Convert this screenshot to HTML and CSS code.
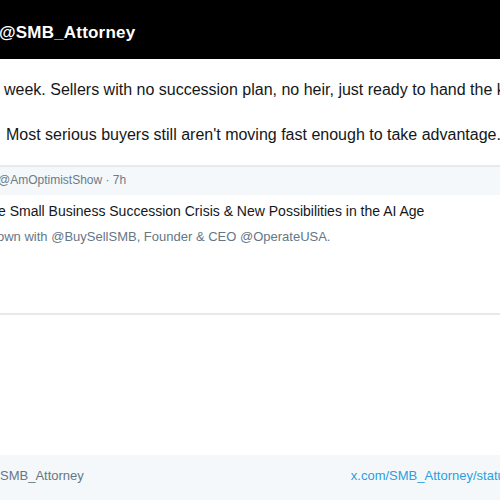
FILE: index.html
```html
<!DOCTYPE HTML>
<html lang="en-US">
<head>
	<meta charset="UTF-8" />
	<title>Post by @SMB_Attorney</title>
	<link rel="stylesheet" href="styles.css">
</head>
<body>

	<div class="page">

		<div class="top">
			<span class="handle">@SMB_Attorney</span>
		</div>

		<div class="post">
			<p class="line first">week. Sellers with no succession plan, no heir, just ready to hand the keys to someone.</p>
			<p class="line second">Most serious buyers still aren't moving fast enough to take advantage.</p>
		</div>

		<div class="quote">
			<div class="quote-head">@AmOptimistShow · 7h</div>
			<div class="quote-body">
				<div class="quote-title">e Small Business Succession Crisis &amp; New Possibilities in the AI Age</div>
				<div class="quote-desc">own with @BuySellSMB, Founder &amp; CEO @OperateUSA.</div>
			</div>
		</div>

		<div class="foot">
			<span class="foot-name">SMB_Attorney</span>
			<span class="foot-link">x.com/SMB_Attorney/status/1900000000000000000</span>
		</div>

	</div>

</body>
</html>
```

FILE: styles.css
```css
* {
	margin: 0;
	padding: 0;
	box-sizing: border-box;
}
body {
	background-color: #fff;
	font-family: "Liberation Sans", Arial, sans-serif;
	overflow: hidden;
}
.page {
	width: 500px;
	height: 500px;
	overflow: hidden;
	display: flex;
	flex-direction: column;
	white-space: nowrap;
}
.top {
	height: 59px;
	background-color: #000;
	display: flex;
	align-items: center;
	padding-top: 6px;
}
.handle {
	color: #fff;
	font-weight: bold;
	font-size: 17px;
	letter-spacing: 0.2px;
	margin-left: -1px;
}
.post {
	padding-top: 21px;
}
.line {
	font-size: 16px;
	line-height: 20px;
	color: #14171a;
}
.first {
	padding-left: 4px;
}
.second {
	margin-top: 25px;
	padding-left: 6px;
}
.quote {
	margin-top: 20px;
	border-top: 2px solid #e6eaec;
	border-bottom: 2px solid #e6eaec;
}
.quote-head {
	height: 28px;
	line-height: 26px;
	background-color: #f5f8fa;
	color: #6e7b86;
	font-size: 12px;
	margin-left: -2px;
}
.quote-body {
	height: 118px;
	padding-top: 7px;
}
.quote-title {
	font-size: 14px;
	line-height: 18px;
	color: #14171a;
	margin-left: -2px;
}
.quote-desc {
	font-size: 13px;
	line-height: 18px;
	color: #657786;
	margin-top: 8px;
	margin-left: -3px;
}
.foot {
	margin-top: auto;
	height: 45px;
	background-color: #f5f8fa;
	display: flex;
	align-items: center;
	padding-bottom: 4px;
	font-size: 13px;
}
.foot-name {
	color: #657786;
}
.foot-link {
	color: #2b9ee0;
	margin-left: auto;
	padding-left: 267px;
}
```
